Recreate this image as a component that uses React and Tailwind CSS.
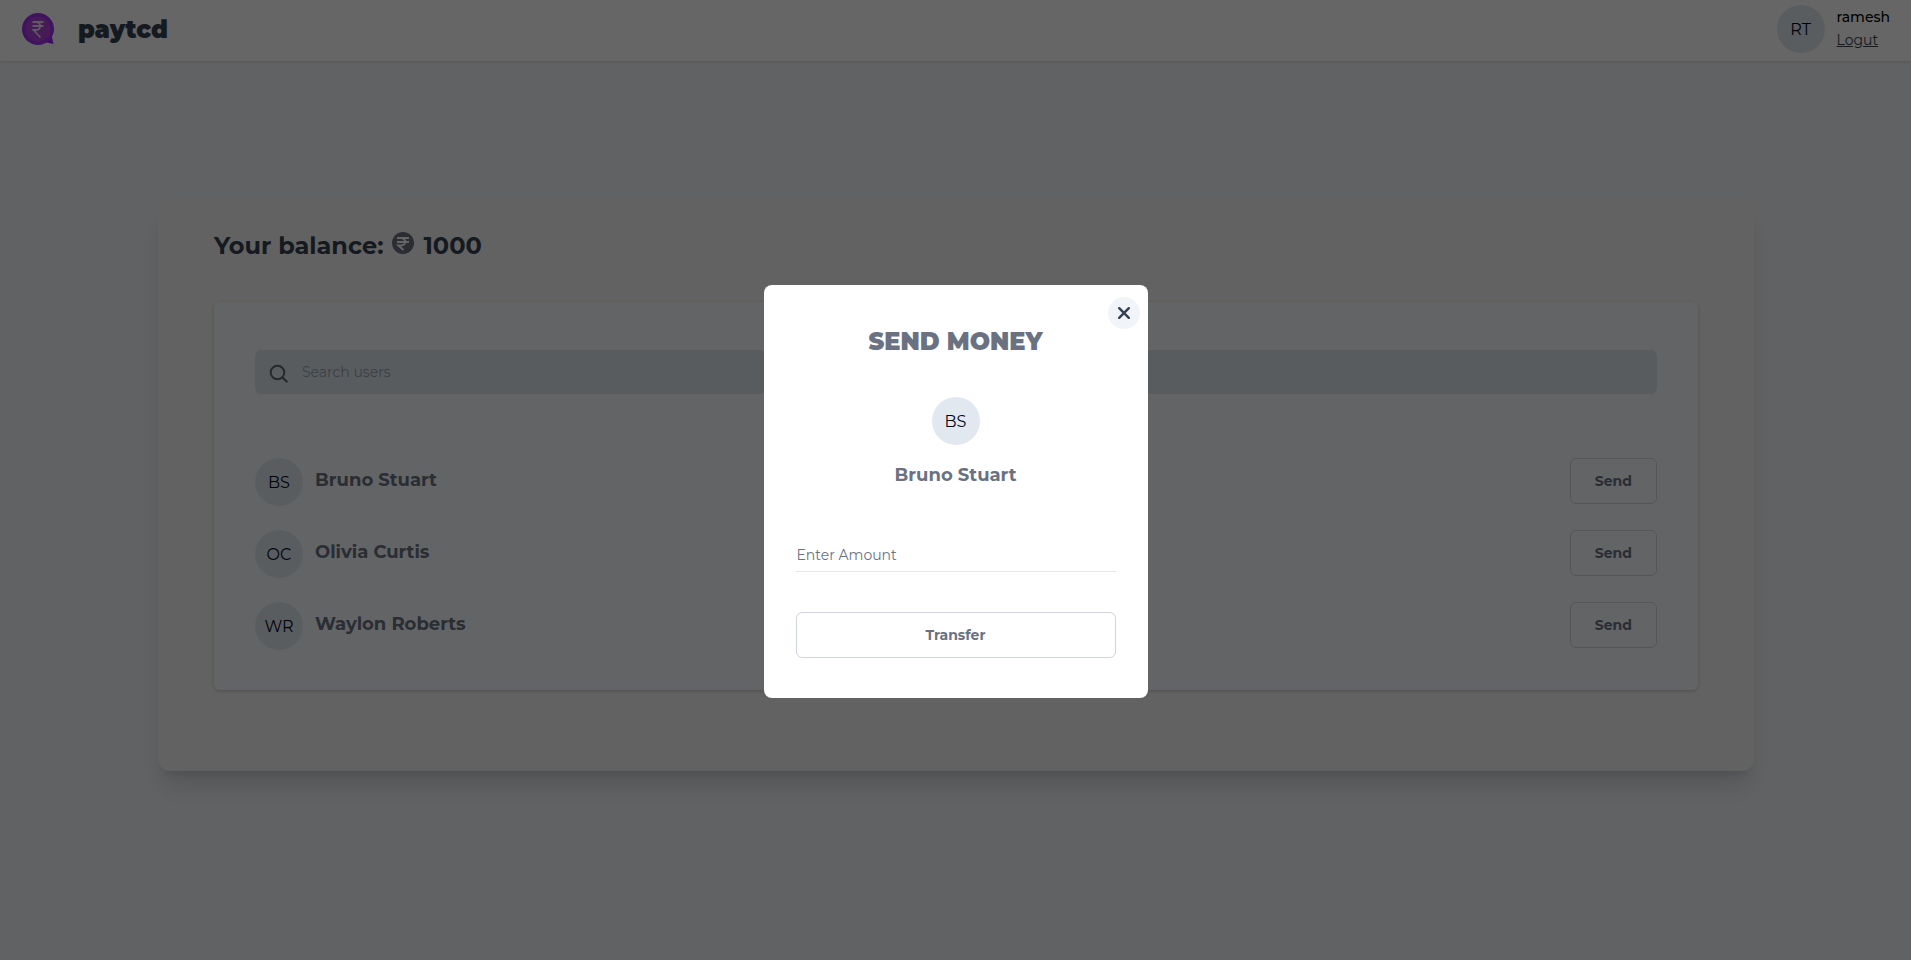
import { useState } from "react";

const users = [
  { initials: "BS", name: "Bruno Stuart" },
  { initials: "OC", name: "Olivia Curtis" },
  { initials: "WR", name: "Waylon Roberts" },
];

function Avatar({ children }) {
  return (
    <div className="flex size-12 shrink-0 items-center justify-center rounded-full bg-slate-200 pt-px text-base text-slate-950">
      {children}
    </div>
  );
}

function Logo() {
  return (
    <svg className="size-8" viewBox="0 0 32 32" fill="none" aria-hidden="true">
      <path d="M29 20 L31.5 31 L22 29 Z" fill="#9a22f0" />
      <circle cx="16" cy="16" r="16" fill="#a030ec" />
      <circle cx="16" cy="16" r="12.5" fill="#b045dc" />
      <path d="M10.5 9 H21.5 M10.5 13 H21.5 M11 9 H14 C19.5 9 19.5 17 14 17 H11.5 L18.5 24.5" stroke="#f1dcfb" strokeWidth="1.8" />
    </svg>
  );
}

function RupeeCoin() {
  return (
    <svg className="mb-[6px] size-[22px]" viewBox="0 0 22 22" fill="none" aria-hidden="true">
      <circle cx="11" cy="11" r="11" fill="#6b7280" />
      <path d="M5 6 H17 M5 10 H17 M5 6 H9 C14.5 6 14.5 13.5 9 13.5 H6.5 L11.5 18" stroke="#fafaf9" strokeWidth="2.1" />
    </svg>
  );
}

function Header() {
  return (
    <header className="flex h-[61px] items-start justify-between bg-white pr-[21px] pl-[22px] shadow">
      <a href="#home" className="mt-[13px] flex h-8 items-center gap-6 text-2xl font-black text-gray-700">
        <Logo />
        <span className="pt-[2px]">paytcd</span>
      </a>
      <div className="mt-[5px] flex gap-3">
        <Avatar>RT</Avatar>
        <div className="flex flex-col items-start text-sm">
          <span className="py-[2px] font-medium text-black">ramesh</span>
          <a href="#logout" className="pt-[1px] text-gray-700 underline">Logut</a>
        </div>
      </div>
    </header>
  );
}

function Dashboard() {
  const [query, setQuery] = useState("");
  const shown = users.filter((u) => u.name.toLowerCase().includes(query.toLowerCase()));
  return (
    <main className="pt-[135px] pr-[157px] pl-[158px]">
      <section className="rounded-xl bg-[#f7f6f4] px-14 pt-[34px] pb-[81px] shadow-[0_20px_25px_-5px_rgba(0,0,0,0.12),0_8px_10px_-6px_rgba(0,0,0,0.12)]">
        <h1 className="flex h-8 items-center gap-[9px] text-2xl font-bold text-gray-700">
          Your balance: <RupeeCoin /> 1000
        </h1>
        <div className="mt-10 rounded-md bg-slate-50 px-[41px] pt-12 pb-10 shadow-[0_1px_4px_rgba(0,0,0,0.2)]">
          <label className="flex h-11 items-center gap-[13px] rounded-md bg-[#dfe7eb] px-[14px]">
            <svg className="mt-[4px] size-5" viewBox="0 0 20 20" fill="none" stroke="#5f6468" strokeWidth="2" aria-hidden="true">
              <circle cx="8.5" cy="8.5" r="6.8" />
              <path d="M13.3 13.3 L18.3 18.3" strokeWidth="2.3" />
            </svg>
            <input
              type="text"
              aria-label="Search users"
              placeholder="Search users"
              value={query}
              onChange={(e) => setQuery(e.target.value)}
              className="min-w-0 flex-1 bg-transparent text-sm outline-none placeholder:text-gray-400"
            />
          </label>
          <ul className="mt-16 flex flex-col gap-6">
            {shown.map((u) => (
              <li key={u.name} className="flex items-start gap-3">
                <Avatar>{u.initials}</Avatar>
                <span className="flex-1 pt-2 text-lg font-bold text-gray-500">{u.name}</span>
                <button type="button" className="h-[46px] rounded-md border border-gray-300 px-6 text-sm font-bold text-gray-500">
                  Send
                </button>
              </li>
            ))}
          </ul>
        </div>
      </section>
    </main>
  );
}

function SendMoneyDialog() {
  const [amount, setAmount] = useState("");
  return (
    <div className="fixed inset-0 flex items-center justify-center bg-black/60 pt-[23px]">
      <div role="dialog" aria-label="Send money" className="relative flex w-96 flex-col items-center rounded-lg bg-white px-8 pt-[41px] pb-10">
        <button type="button" aria-label="Close" className="absolute top-3 right-2 flex size-8 items-center justify-center rounded-full bg-slate-100">
          <svg className="size-3" viewBox="0 0 12 12" stroke="#334155" strokeWidth="2.4" strokeLinecap="round" aria-hidden="true">
            <path d="M1.2 1.2 L10.8 10.8 M10.8 1.2 L1.2 10.8" />
          </svg>
        </button>
        <h2 className="text-2xl font-black text-gray-500">SEND MONEY</h2>
        <div className="mt-[39px]">
          <Avatar>BS</Avatar>
        </div>
        <p className="mt-4 text-lg font-bold text-gray-500">Bruno Stuart</p>
        <input
          type="text"
          inputMode="numeric"
          aria-label="Enter Amount"
          placeholder="Enter Amount"
          value={amount}
          onChange={(e) => setAmount(e.target.value)}
          className="mt-[50px] h-[33px] w-full border-b border-gray-200 px-px text-sm outline-none placeholder:text-gray-500"
        />
        <button type="button" className="mt-10 h-[46px] w-full rounded-md border border-gray-300 text-sm font-bold text-gray-500">
          Transfer
        </button>
      </div>
    </div>
  );
}

export default function App() {
  return (
    <div className="min-h-screen bg-slate-100 font-['Montserrat','Inter',sans-serif]">
      <Header />
      <Dashboard />
      <SendMoneyDialog />
    </div>
  );
}
